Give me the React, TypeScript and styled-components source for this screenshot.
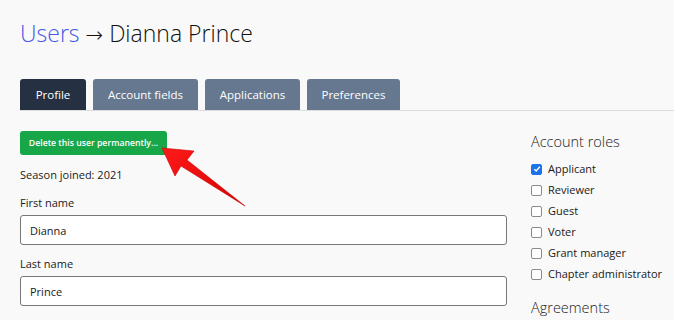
import React from "react";
import styled, { createGlobalStyle } from "styled-components";

const Global = createGlobalStyle`
  html, body { margin: 0; padding: 0; background: #f9f9f9; }
  body { font-family: "Open Sans", "Noto Sans", "Liberation Sans", sans-serif; color: #1a1a1a; }
`;

const Page = styled.div`
  position: relative;
  padding: 16px 0 0 20px;
  height: 320px;
  box-sizing: border-box;
  overflow: hidden;
`;

const Title = styled.h1`
  margin: 0;
  font-size: 23px;
  font-weight: 300;
  line-height: 35px;
  color: #111;
  white-space: nowrap;
`;

const Crumb = styled.a`
  color: #4558e6;
  text-decoration: none;
`;

const Arrow = styled.span`
  font-family: "DejaVu Sans", sans-serif;
  font-size: 21px;
`;

const Tabs = styled.div`
  display: flex;
  gap: 7px;
  margin-top: 26px;
  border-bottom: 1px solid #dcdcdc;
`;

const Tab = styled.div<{ $active?: boolean; $width: number }>`
  height: 31px;
  width: ${(p) => p.$width}px;
  display: flex;
  align-items: center;
  justify-content: center;
  background: ${(p) => (p.$active ? "#253142" : "#66788f")};
  color: #fff;
  font-size: 11.5px;
  font-weight: 500;
  border-radius: 3px 3px 0 0;
`;

const Body = styled.div`
  display: grid;
  grid-template-columns: 487px 1fr;
  column-gap: 24px;
  margin-top: 20px;
`;

const Left = styled.div`
  display: flex;
  flex-direction: column;
`;

const DangerButton = styled.button`
  align-self: flex-start;
  height: 24px;
  width: 147px;
  padding: 0;
  border: none;
  border-radius: 3px;
  background: #17a748;
  color: #fff;
  font-family: inherit;
  font-size: 8.7px;
  font-weight: 600;
`;

const Text = styled.div`
  font-size: 11px;
  line-height: 16px;
  margin-top: 12px;
`;

const Label = styled.label<{ $top: number }>`
  font-size: 11px;
  line-height: 16px;
  margin-top: ${(p) => p.$top}px;
`;

const Input = styled.div`
  margin-top: 4px;
  height: 30px;
  box-sizing: border-box;
  border: 1px solid #777;
  border-radius: 3px;
  background: #fff;
  font-size: 11px;
  display: flex;
  align-items: center;
  padding-left: 9px;
`;

const Right = styled.div`
  display: flex;
  flex-direction: column;
  white-space: nowrap;
`;

const Heading = styled.h2<{ $top?: number }>`
  margin: ${(p) => p.$top ?? 0}px 0 0;
  font-size: 14.5px;
  font-weight: 300;
  line-height: 22px;
  color: #222;
`;

const Roles = styled.div`
  display: flex;
  flex-direction: column;
  gap: 5px;
  margin-top: 8px;
`;

const Role = styled.label`
  display: flex;
  align-items: center;
  gap: 6px;
  font-size: 11px;
  line-height: 16px;
`;

const Box = styled.span<{ $checked?: boolean }>`
  width: 11px;
  height: 11px;
  border-radius: 2px;
  box-sizing: border-box;
  border: 1px solid ${(p) => (p.$checked ? "#1a73e8" : "#8a8a8a")};
  background: ${(p) => (p.$checked ? "#1a73e8" : "#fff")};
  display: flex;
  align-items: center;
  justify-content: center;
`;

const ArrowSvg = styled.svg`
  position: absolute;
  left: 0;
  top: 0;
  pointer-events: none;
`;

const tabs = [
  { name: "Profile", width: 66, active: true },
  { name: "Account fields", width: 105 },
  { name: "Applications", width: 95 },
  { name: "Preferences", width: 93 },
];

const roles = [
  { name: "Applicant", checked: true },
  { name: "Reviewer" },
  { name: "Guest" },
  { name: "Voter" },
  { name: "Grant manager" },
  { name: "Chapter administrator" },
];

export default function App() {
  return (
    <>
      <Global />
      <Page>
        <Title>
          <Crumb>Users</Crumb> <Arrow>→</Arrow> Dianna Prince
        </Title>
        <Tabs>
          {tabs.map((t) => (
            <Tab key={t.name} $active={t.active} $width={t.width}>
              {t.name}
            </Tab>
          ))}
        </Tabs>
        <Body>
          <Left>
            <DangerButton>Delete this user permanently...</DangerButton>
            <Text>Season joined: 2021</Text>
            <Label $top={12}>First name</Label>
            <Input>Dianna</Input>
            <Label $top={11}>Last name</Label>
            <Input>Prince</Input>
          </Left>
          <Right>
            <Heading>Account roles</Heading>
            <Roles>
              {roles.map((r) => (
                <Role key={r.name}>
                  <Box $checked={r.checked}>
                    {r.checked && (
                      <svg width="8" height="8" viewBox="0 0 8 8">
                        <path d="M1.3 4.2 L3.2 6 L6.8 1.8" stroke="#fff" strokeWidth="1.5" fill="none" />
                      </svg>
                    )}
                  </Box>
                  {r.name}
                </Role>
              ))}
            </Roles>
            <Heading $top={15}>Agreements</Heading>
          </Right>
        </Body>
        <ArrowSvg width="674" height="320" viewBox="0 0 674 320">
          <defs>
            <linearGradient id="ag" x1="0" y1="0" x2="1" y2="1">
              <stop offset="0" stopColor="#ff1a1a" />
              <stop offset="1" stopColor="#d40000" />
            </linearGradient>
          </defs>
          <path
            d="M162 148 L194 151 L187 160 L245 206 L181 166 L175 176 Z"
            fill="url(#ag)"
            stroke="#c00"
            strokeWidth="0.6"
            strokeLinejoin="round"
          />
        </ArrowSvg>
      </Page>
    </>
  );
}
